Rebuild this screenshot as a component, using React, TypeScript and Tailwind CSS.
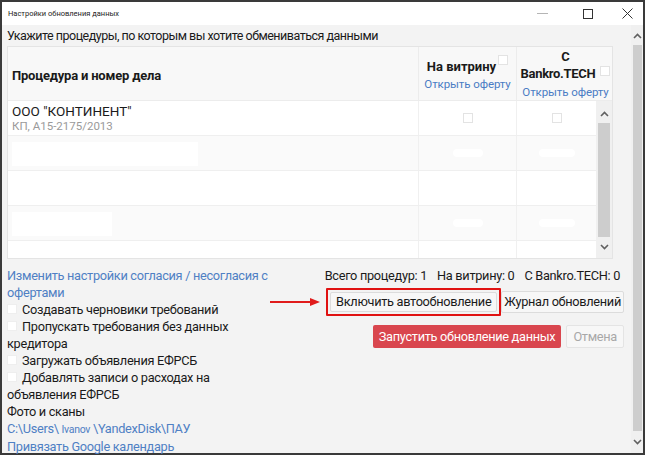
import React from 'react';

const Box = ({ className = '' }: { className?: string }) => (
  <span className={`inline-block w-[10px] h-[10px] bg-white border border-[#e3e3e3] shrink-0 ${className}`} />
);

const Chevron = ({ up }: { up?: boolean }) => (
  <svg width="9" height="6" viewBox="0 0 9 6" className="block">
    <path
      d={up ? 'M1 5 L4.5 1.5 L8 5' : 'M1 1 L4.5 4.5 L8 1'}
      fill="none"
      stroke="#606060"
      strokeWidth="1.6"
    />
  </svg>
);

const rows = [
  { bg: 'bg-white', name: 'ООО "КОНТИНЕНТ"', sub: 'КП, А15-2175/2013', boxes: true },
  { bg: 'bg-[#fafafa]', patch: 'w-[186px]' },
  { bg: 'bg-white' },
  { bg: 'bg-[#fafafa]', patch: 'w-[100px]' },
  { bg: 'bg-white', short: true },
];

const App: React.FC = () => {
  return (
    <div
      className="w-[646px] h-[456px] overflow-hidden bg-white text-[#1a1a1a]"
      style={{ fontFamily: 'Roboto, "Noto Sans", sans-serif' }}
    >
      <div className="h-[455px] w-[645px] border-2 border-[#3a3a3a] flex flex-col">
        {/* title bar */}
        <div className="h-[23px] bg-white flex items-center pl-[6px] shrink-0">
          <span className="text-[7.5px] text-[#222] flex-1">Настройки обновления данных</span>
          <div className="flex items-center h-full">
            <div className="w-[46px] flex justify-center">
              <span className="block w-[11px] h-px bg-[#b5b5b5]" />
            </div>
            <div className="w-[46px] flex justify-center">
              <span className="block w-[10px] h-[10px] border border-[#333]" />
            </div>
            <div className="w-[32px] flex justify-center">
              <svg width="11" height="11" viewBox="0 0 11 11">
                <path d="M0.5 0.5 L10.5 10.5 M10.5 0.5 L0.5 10.5" stroke="#333" strokeWidth="1" />
              </svg>
            </div>
          </div>
        </div>

        {/* body */}
        <div className="flex-1 flex bg-[#f3f3f3] min-h-0">
          <div className="flex-1 pl-[5px] pr-[7px] flex flex-col min-w-0">
            <div className="h-[22px] flex items-center text-[12.5px] tracking-[-0.5px] pt-[2px] whitespace-nowrap">
              Укажите процедуры, по которым вы хотите обмениваться данными
            </div>

            {/* table */}
            <div className="w-[606px] border border-[#e4e4e4] flex flex-col">
              <div className="grid grid-cols-[410px_98px_1fr] h-[54px] bg-[#f8f8f8] border-b border-[#ececec]">
                <div className="flex items-center pl-[4px] pt-[2px] text-[13px] font-bold tracking-[-0.2px]">
                  Процедура и номер дела
                </div>
                <div className="border-l border-[#ececec] flex flex-col items-center justify-center pt-[2px]">
                  <div className="text-[13px] font-bold leading-[17px] flex items-start">
                    <span>На витрину</span>
                    <Box className="ml-[2px] -mt-[3px]" />
                  </div>
                  <span className="text-[11.5px] tracking-[-0.1px] leading-[18px] text-[#4a7cc4]">Открыть оферту</span>
                </div>
                <div className="border-l border-[#ececec] flex flex-col items-center justify-center pl-[2px] pt-[2px]">
                  <span className="text-[13px] font-bold leading-[16px]">С</span>
                  <div className="text-[13px] font-bold tracking-[-0.3px] leading-[17px] flex items-start">
                    <span>Bankro.TECH</span>
                    <Box className="ml-[5px] mt-[1px]" />
                  </div>
                  <span className="text-[11.5px] tracking-[-0.1px] leading-[20px] text-[#4a7cc4]">Открыть оферту</span>
                </div>
              </div>

              <div className="flex h-[157px]">
                <div className="flex-1 flex flex-col">
                  {rows.map((r, i) => (
                    <div
                      key={i}
                      className={`grid grid-cols-[410px_98px_1fr] ${r.short ? 'flex-1' : 'h-[35px] border-b border-[#efefef]'} ${r.bg}`}
                    >
                      <div className="pl-[4px] pt-[2px] flex flex-col justify-center">
                        {r.name ? (
                          <>
                            <span className="text-[13.5px] leading-[16px]">{r.name}</span>
                            <span className="text-[11.5px] leading-[15px] text-[#9a9a9a]">{r.sub}</span>
                          </>
                        ) : r.patch ? (
                          <span className={`block h-[24px] bg-white ${r.patch}`} />
                        ) : null}
                      </div>
                      <div className="border-l border-[#f0f0f0] flex items-center justify-center">
                        {r.boxes ? <Box /> : r.patch ? <span className="block w-[30px] h-[8px] rounded-full bg-white" /> : null}
                      </div>
                      <div className="border-l border-[#f0f0f0] flex items-center justify-center">
                        {r.boxes ? <Box /> : r.patch ? <span className="block w-[36px] h-[8px] rounded-full bg-white" /> : null}
                      </div>
                    </div>
                  ))}
                </div>
                {/* inner scrollbar */}
                <div className="w-[16px] bg-[#f0f0f0] flex flex-col items-center">
                  <div className="h-[22px] flex items-center justify-center pt-[5px]">
                    <Chevron up />
                  </div>
                  <div className="w-[12px] h-[114px] bg-[#cdcdcd]" />
                  <div className="flex-1 flex items-center justify-center">
                    <Chevron />
                  </div>
                </div>
              </div>
            </div>

            {/* footer */}
            <div className="flex mt-[8px] text-[12.75px] tracking-[-0.3px]">
              <div className="w-[285px] leading-[17px] flex flex-col">
                <span className="text-[#4f80c4] whitespace-nowrap">Изменить настройки согласия / несогласия с</span>
                <span className="text-[#4f80c4]">офертами</span>
                <label className="flex items-center whitespace-nowrap">
                  <Box className="mr-[5px] border-[#eeeeee]" />Создавать черновики требований
                </label>
                <label className="flex items-center whitespace-nowrap">
                  <Box className="mr-[5px] border-[#eeeeee]" />Пропускать требования без данных
                </label>
                <span>кредитора</span>
                <label className="flex items-center whitespace-nowrap">
                  <Box className="mr-[5px] border-[#eeeeee]" />Загружать объявления ЕФРСБ
                </label>
                <label className="flex items-center whitespace-nowrap">
                  <Box className="mr-[5px] border-[#eeeeee]" />Добавлять записи о расходах на
                </label>
                <span>объявления ЕФРСБ</span>
                <span>Фото и сканы</span>
                <span className="text-[#4f80c4] whitespace-nowrap">
                  C:\Users\ <span className="text-[10.5px]">Ivanov</span> \YandexDisk\ПАУ
                </span>
                <span className="text-[#4f80c4] whitespace-nowrap">Привязать Google календарь</span>
              </div>

              <div className="flex-1 flex flex-col items-end">
                <div className="leading-[17px] whitespace-nowrap pr-[4px] flex gap-[10px]">
                  <span>Всего процедур: 1</span>
                  <span>На витрину: 0</span>
                  <span>С Bankro.TECH: 0</span>
                </div>
                <div className="flex items-center mt-[4px] relative">
                  <svg width="52" height="10" viewBox="0 0 52 10" className="absolute -left-[56px] top-[9px]">
                    <path d="M0 5 H42" stroke="#e01b1b" strokeWidth="2" />
                    <path d="M40 1 L50 5 L40 9 Z" fill="#e01b1b" />
                  </svg>
                  <div className="border-2 border-[#e01212] p-[2px] rounded-[1px]">
                    <button className="h-[20px] px-[5px] bg-[#f7f7f7] border border-[#dcdcdc] rounded-[2px] leading-[18px] whitespace-nowrap">
                      Включить автообновление
                    </button>
                  </div>
                  <button className="h-[22px] px-[2px] bg-[#f7f7f7] border border-[#dcdcdc] rounded-[2px] leading-[20px] whitespace-nowrap">
                    Журнал обновлений
                  </button>
                </div>
                <div className="flex items-center mt-[9px] gap-[5px]">
                  <button className="h-[23px] px-[6px] bg-[#d9464e] text-white rounded-[2px] leading-[21px] whitespace-nowrap">
                    Запустить обновление данных
                  </button>
                  <button className="h-[23px] px-[6px] bg-[#f7f7f7] text-[#a8a8a8] border border-[#e4e4e4] rounded-[2px] leading-[21px]">
                    Отмена
                  </button>
                </div>
              </div>
            </div>
          </div>

          {/* outer scrollbar */}
          <div className="w-[12px] bg-[#f0f0f0] flex flex-col items-center">
            <div className="h-[18px] flex items-center justify-center pt-[4px]">
              <Chevron up />
            </div>
            <div className="w-[9px] flex-1 bg-[#cdcdcd] mt-[2px]" />
            <div className="h-[22px] flex items-center justify-center">
              <Chevron />
            </div>
          </div>
        </div>
      </div>
    </div>
  );
};

export default App;
